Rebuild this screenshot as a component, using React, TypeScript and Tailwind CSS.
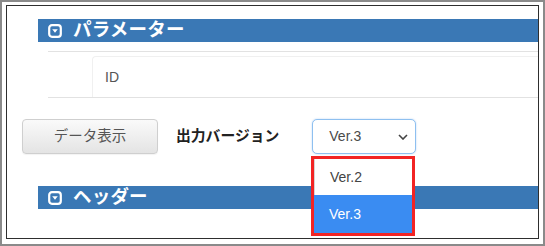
import React from "react";

const Icon = () => (
  <svg width="14" height="14" viewBox="0 0 14 14" className="shrink-0">
    <rect x="1.2" y="1.2" width="11.6" height="11.6" rx="2.8" fill="none" stroke="#fff" strokeWidth="2.2" />
    <path d="M4.2 5.3 L9.8 5.3 L7 8.8 Z" fill="#fff" />
  </svg>
);

const Bar = ({ label, className = "" }: { label: string; className?: string }) => (
  <div className={`ml-[31px] h-[23px] bg-[#3a78b5] flex items-center pl-[10px] gap-[11px] ${className}`}>
    <Icon />
    <span className="text-white font-bold text-[18.5px] leading-none tracking-[0.2px]">{label}</span>
  </div>
);

export default function App() {
  return (
    <div
      className="w-[545px] h-[246px] border-2 border-[#8a8a8a] bg-white pt-[3px] pl-[4px] overflow-hidden"
      style={{ fontFamily: '"Liberation Sans", "Noto Sans CJK JP", sans-serif' }}
    >
      <div className="relative w-[533px] h-[234px] border border-[#2e2e2e] overflow-hidden">
        <Bar label="パラメーター" className="mt-[13px]" />
        <div className="mt-[9px] ml-[41px] h-[47px] border-t border-b border-[#e2e2e2] pl-[44px] pt-[4px]">
          <div className="h-[41px] border-t border-l border-[#f0f0f0] rounded-tl-[4px] flex items-center pl-[12px] text-[14px] text-[#555]">
            ID
          </div>
        </div>
        <div className="mt-[21px] ml-[15px] flex items-center h-[35px]">
          <button className="w-[136px] h-[35px] rounded-[4px] border border-[#cfcfcf] bg-gradient-to-b from-[#fafafa] to-[#e4e4e4] text-[#555] text-[14.5px] flex items-center justify-center shadow-[0_1px_1px_rgba(0,0,0,0.05)]">
            データ表示
          </button>
          <span className="ml-[18px] text-[14.8px] font-bold text-[#222]">出力バージョン</span>
          <div className="ml-[33px] w-[104px] h-[35px] rounded-[5px] border border-[#8ec0f0] shadow-[0_0_2px_rgba(80,150,230,0.4)] bg-white flex items-center pl-[16px] pr-[7px] text-[14px] text-[#4a4a4a]">
            <span className="flex-1">Ver.3</span>
            <svg width="10" height="6" viewBox="0 0 10 6">
              <path d="M1 1 L5 5 L9 1" fill="none" stroke="#444" strokeWidth="1.6" />
            </svg>
          </div>
        </div>
        <Bar label="ヘッダー" className="mt-[32px]" />
        <div className="absolute left-[304px] top-[150px] w-[104px] h-[80px] border-[3px] border-[#f22424] bg-white flex flex-col text-[14px]">
          <div className="h-[36px] flex items-center pl-[15px] text-[#444] border-l border-[#d6d6d6]">Ver.2</div>
          <div className="flex-1 flex items-center pl-[15px] text-white bg-[#3a8cf2]">Ver.3</div>
        </div>
      </div>
    </div>
  );
}
